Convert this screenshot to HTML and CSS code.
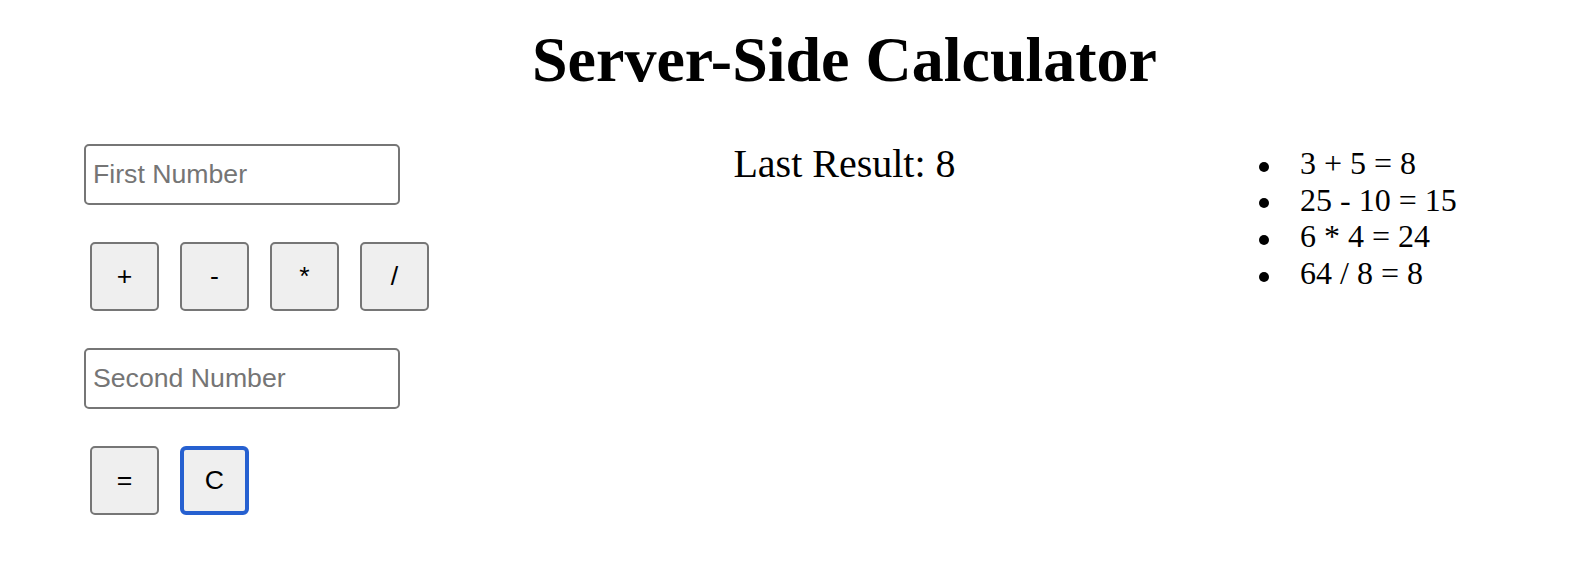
FILE: index.html
```html
<!DOCTYPE html>
<html>
<head>
<meta charset="utf-8">
<title>Server-Side Calculator</title>
<link rel="stylesheet" href="styles.css">
</head>
<body>
<div class="layout">
  <h1 class="title">Server-Side Calculator</h1>
  <form class="calc">
    <input class="num" type="text" placeholder="First Number">
    <div class="ops">
      <button type="button" class="btn">+</button>
      <button type="button" class="btn">-</button>
      <button type="button" class="btn">*</button>
      <button type="button" class="btn">/</button>
    </div>
    <input class="num" type="text" placeholder="Second Number">
    <div class="ops">
      <button type="button" class="btn">=</button>
      <button type="button" class="btn focused">C</button>
    </div>
  </form>
  <div class="result">Last Result: 8</div>
  <ul class="history">
    <li>3 + 5 = 8</li>
    <li>25 - 10 = 15</li>
    <li>6 * 4 = 24</li>
    <li>64 / 8 = 8</li>
  </ul>
</div>
</body>
</html>
```
FILE: styles.css
```css
html, body {
  margin: 0;
  padding: 0;
  background: #fff;
}
body {
  font-family: "Liberation Serif", "Times New Roman", serif;
  color: #000;
}
.layout {
  display: grid;
  grid-template-columns: 440px 641px 1fr;
  padding-left: 84px;
  align-items: start;
}
.title {
  grid-column: 2;
  grid-row: 1;
  margin: 23px 0 44px;
  font-size: 64px;
  line-height: 74px;
  font-weight: bold;
  text-align: center;
  white-space: nowrap;
}
.calc {
  grid-column: 1;
  grid-row: 2;
  display: flex;
  flex-direction: column;
  align-items: flex-start;
  gap: 37px;
  margin: 3px 0 0;
}
.num {
  box-sizing: border-box;
  width: 316px;
  height: 61px;
  margin: 0;
  padding: 0 7px;
  border: 2px solid #767676;
  border-radius: 5px;
  font-family: "Liberation Sans", Arial, sans-serif;
  font-size: 26.67px;
  color: #000;
  background: #fff;
  outline: none;
}
.num::placeholder {
  color: #757575;
}
.ops {
  display: flex;
  gap: 21px;
  margin-left: 6px;
}
.btn {
  box-sizing: border-box;
  width: 69px;
  height: 69px;
  margin: 0;
  padding: 0;
  border: 2px solid #767676;
  border-radius: 5px;
  background: #efefef;
  color: #000;
  font-family: "Liberation Sans", Arial, sans-serif;
  font-size: 26.67px;
}
.btn.focused {
  border: 4px solid #2660d0;
  border-radius: 6px;
}
.result {
  grid-column: 2;
  grid-row: 2;
  text-align: center;
  font-size: 40px;
  line-height: 46px;
}
.history {
  grid-column: 3;
  grid-row: 2;
  margin: 4px 0 0;
  padding-left: 135px;
  font-size: 32px;
  line-height: 36.7px;
  list-style: none;
}
.history li::before {
  content: "";
  display: inline-block;
  width: 10px;
  height: 10px;
  border-radius: 50%;
  background: #000;
  margin-left: -41px;
  margin-right: 31px;
  vertical-align: middle;
}
```
